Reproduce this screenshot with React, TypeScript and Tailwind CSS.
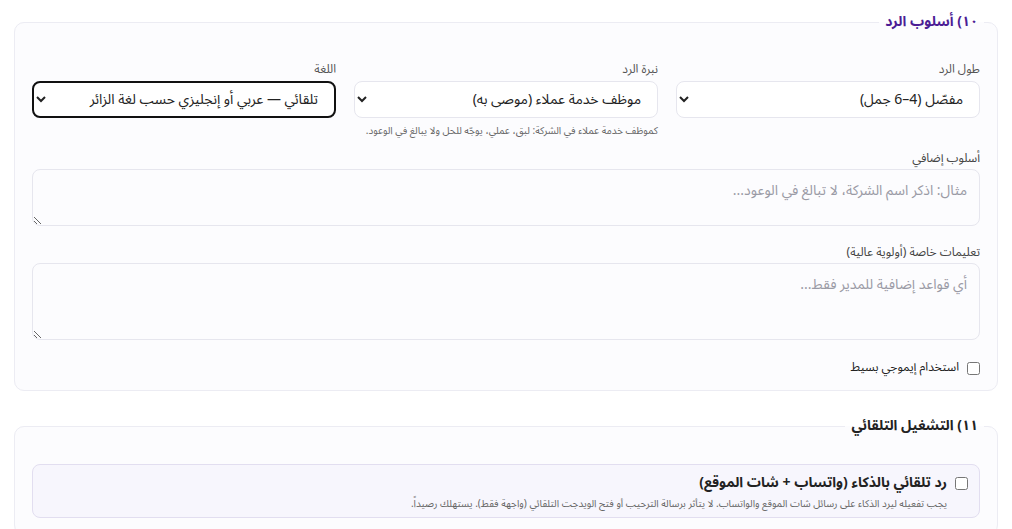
import React from 'react';

const font = { fontFamily: '"Noto Sans Arabic", "Noto Sans", "DejaVu Sans", sans-serif' };

interface SelectFieldProps {
  label: string;
  value: string;
  options: string[];
  hint?: string;
  focused?: boolean;
}

const SelectField: React.FC<SelectFieldProps> = ({ label, value, options, hint, focused }) => (
  <div className="flex flex-col">
    <label className="mb-[3px] text-[12px] leading-4 text-[#555]">{label}</label>
    <select
      dir="rtl"
      defaultValue={value}
      className={`h-[37px] w-full rounded-lg bg-white px-3 text-[14px] text-[#222] ${
        focused ? 'border-2 border-[#111]' : 'border border-[#e6e6ee]'
      }`}
    >
      {options.map((o) => (
        <option key={o}>{o}</option>
      ))}
    </select>
    {hint && <p className="mt-[7px] text-[10px] leading-3 text-[#666]">{hint}</p>}
  </div>
);

export default function App() {
  return (
    <div dir="rtl" className="min-h-[529px] bg-white pt-3 text-[#222]" style={font}>
      {/* section 10: reply style */}
      <fieldset className="mx-[14px] rounded-[10px] border border-[#ececf3] bg-[#fcfcfe] px-[17px] pb-[13px]">
        <legend className="-mr-[4px] px-1.5 text-[14px] font-bold leading-5 text-[#4c1d95]">
          ١٠) أسلوب الرد
        </legend>

        <div className="mt-[30px] grid grid-cols-3 gap-[18px]">
          <SelectField
            label="طول الرد"
            value="مفصّل (4–6 جمل)"
            options={['قصير (1–2 جمل)', 'متوسط (2–4 جمل)', 'مفصّل (4–6 جمل)']}
          />
          <SelectField
            label="نبرة الرد"
            value="موظف خدمة عملاء (موصى به)"
            options={['موظف خدمة عملاء (موصى به)', 'رسمي', 'ودود']}
            hint="كموظف خدمة عملاء في الشركة: لبق، عملي، يوجّه للحل ولا يبالغ في الوعود."
          />
          <SelectField
            label="اللغة"
            value="تلقائي — عربي أو إنجليزي حسب لغة الزائر"
            options={['تلقائي — عربي أو إنجليزي حسب لغة الزائر', 'عربي', 'English']}
            focused
          />
        </div>

        <label className="mt-[14px] mb-[2px] block text-[12px] leading-4 text-[#444]">أسلوب إضافي</label>
        <textarea
          className="block h-[57px] w-full rounded-lg border border-[#e6e6ee] bg-[#fcfcfe] px-3 py-2.5 text-[14px] placeholder:text-[#9a9aa5]"
          placeholder="مثال: اذكر اسم الشركة، لا تبالغ في الوعود..."
        />

        <label className="mt-[19px] mb-[2px] block text-[12px] leading-4 text-[#444]">تعليمات خاصة (أولوية عالية)</label>
        <textarea
          className="block h-[77px] w-full rounded-lg border border-[#e6e6ee] bg-[#fcfcfe] px-3 py-2.5 text-[14px] placeholder:text-[#9a9aa5]"
          placeholder="أي قواعد إضافية للمدير فقط..."
        />

        <label className="mt-[19px] flex items-center gap-2 text-[12px] text-[#222]">
          <input type="checkbox" className="h-[13px] w-[13px]" />
          استخدام إيموجي بسيط
        </label>
      </fieldset>

      {/* section 11: auto run */}
      <fieldset className="mx-[14px] mt-[25px] rounded-[10px] border border-[#ececf3] bg-[#fcfcfe] px-[17px] pb-4">
        <legend className="-mr-[4px] px-1.5 text-[14px] font-bold leading-5 text-[#222]">
          ١١) التشغيل التلقائي
        </legend>

        <div className="mt-[28px] rounded-lg border border-[#e2def0] bg-[#f7f6fd] px-[11px] pt-[8px] pb-[7px]">
          <label className="flex items-center gap-2 text-[14px] font-bold leading-5 text-[#222]">
            <input type="checkbox" className="h-[13px] w-[13px]" />
            رد تلقائي بالذكاء (واتساب + شات الموقع)
          </label>
          <p className="mr-[21px] mt-[5px] text-[10px] leading-3 text-[#666]">
            يجب تفعيله ليرد الذكاء على رسائل شات الموقع والواتساب. لا يتأثر برسالة الترحيب أو فتح الويدجت التلقائي (واجهة فقط). يستهلك رصيداً.
          </p>
        </div>
      </fieldset>
    </div>
  );
}
